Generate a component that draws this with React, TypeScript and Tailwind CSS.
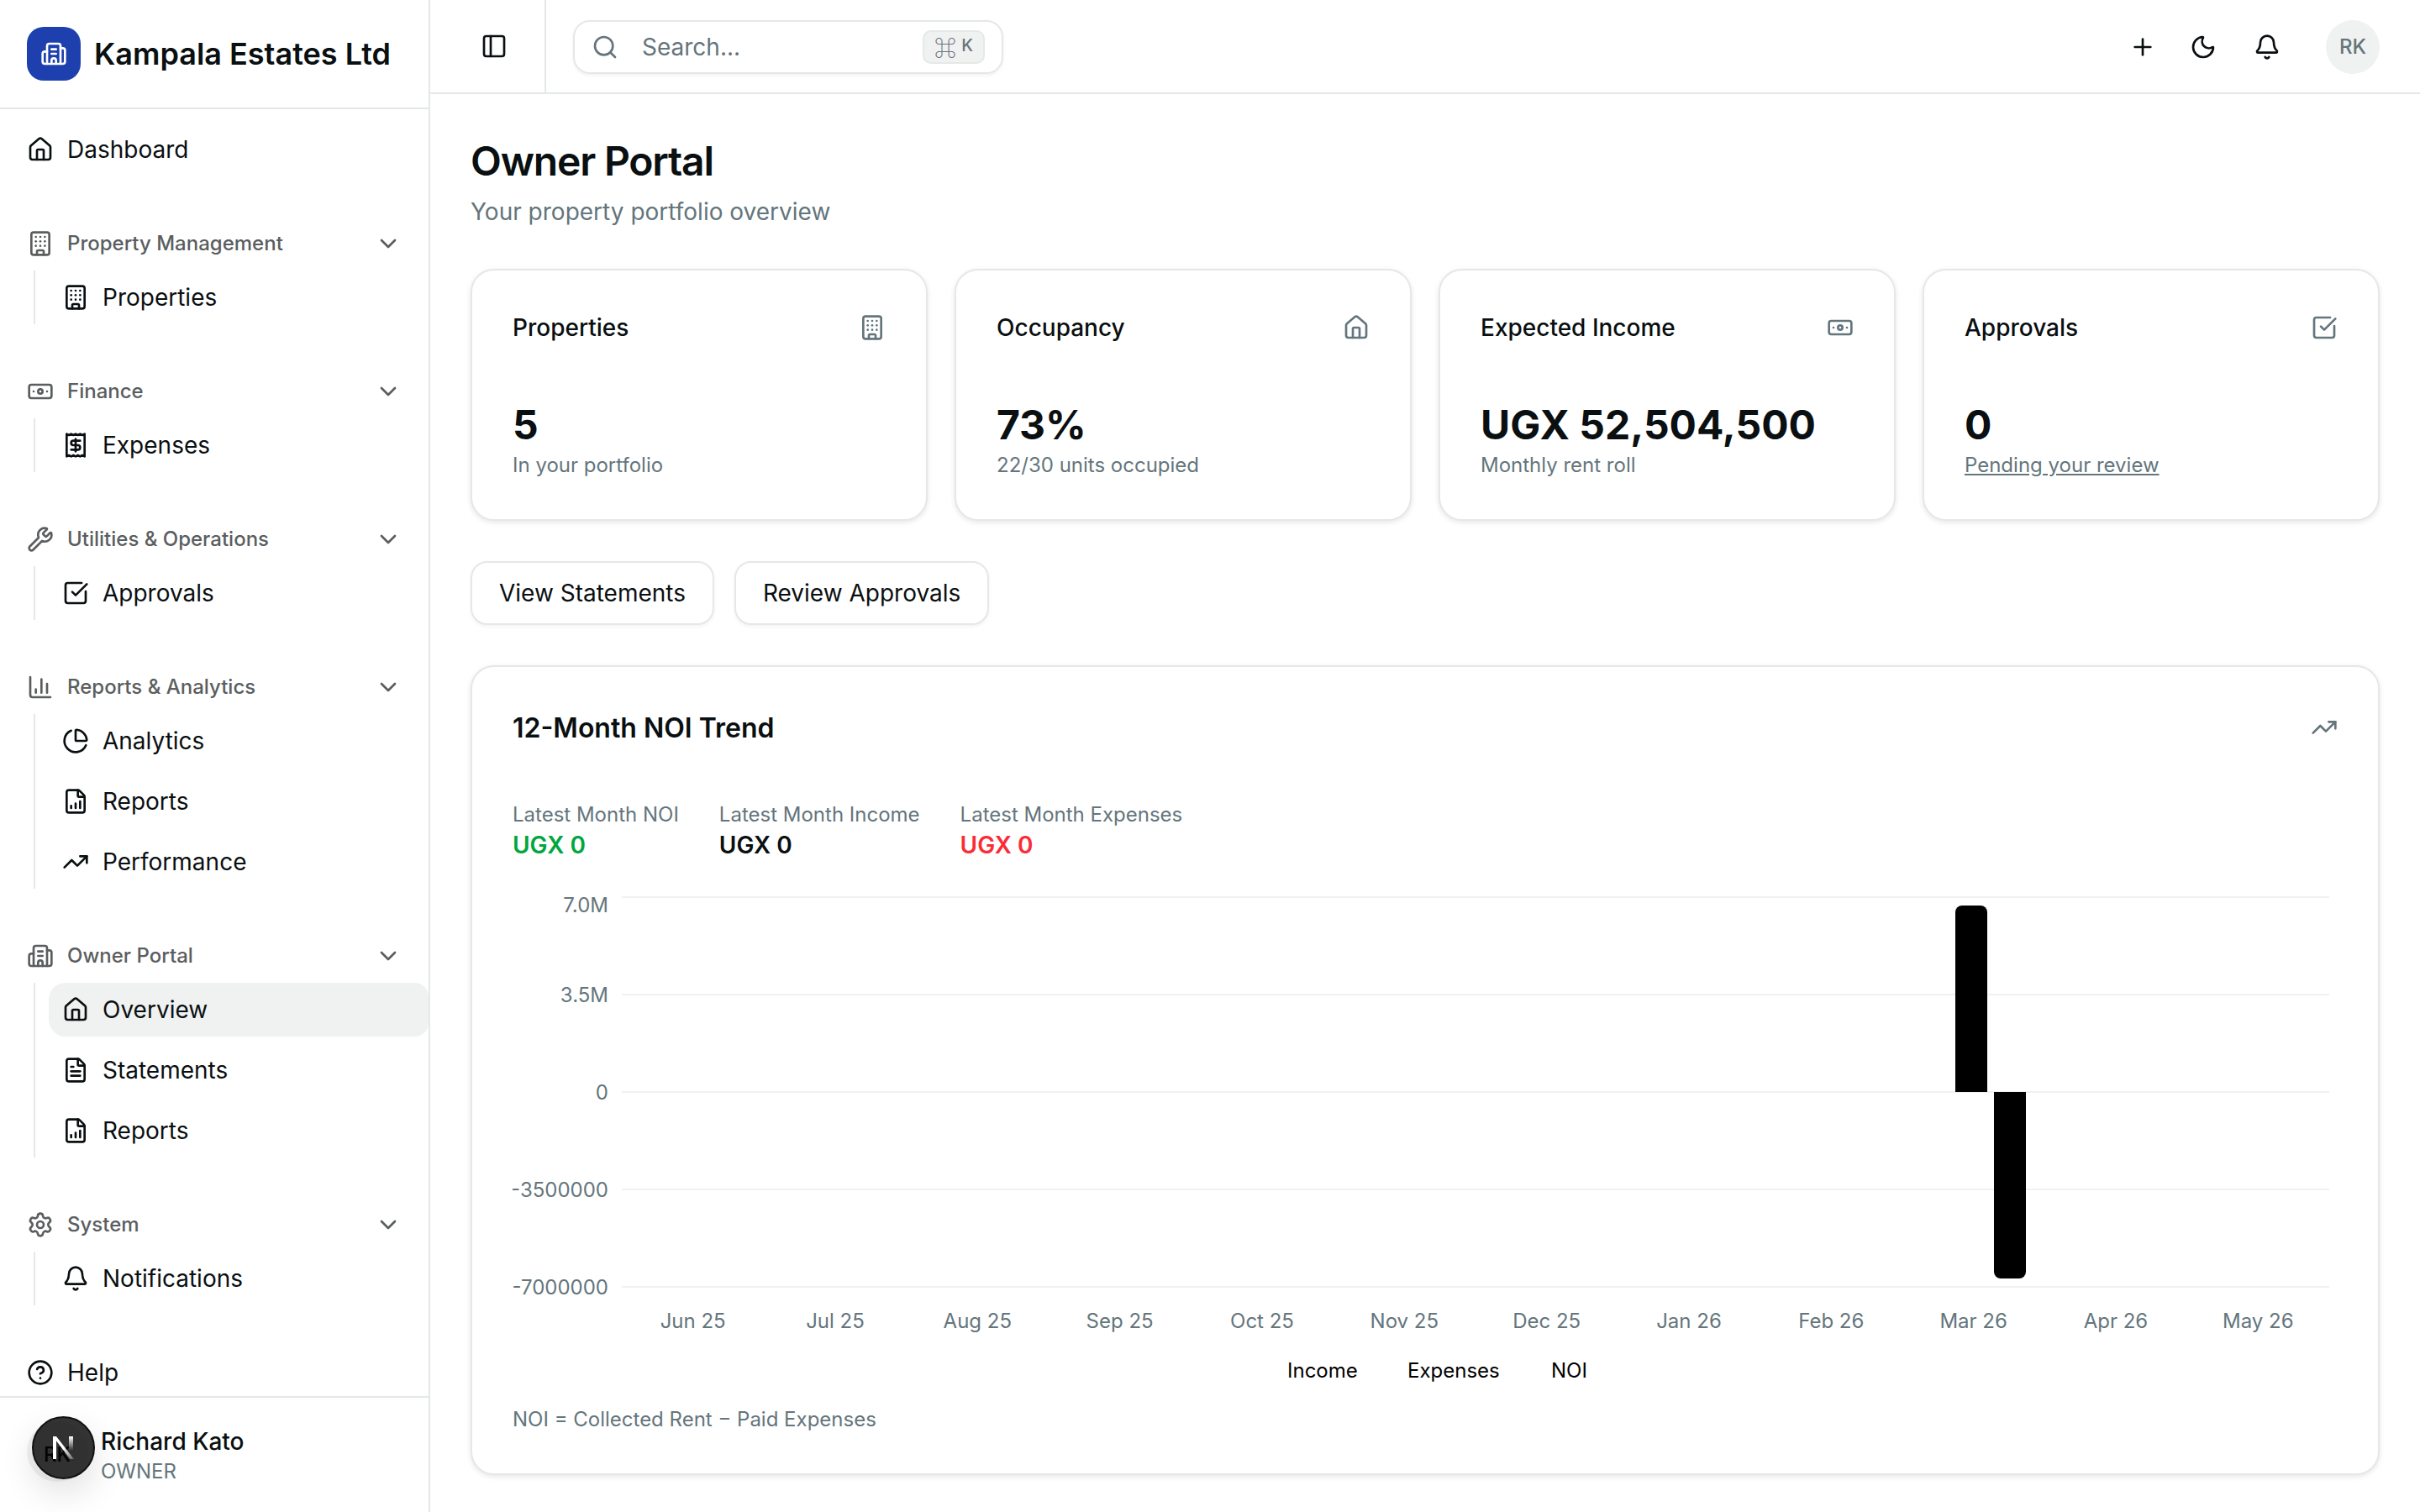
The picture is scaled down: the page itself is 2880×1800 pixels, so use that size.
import {
  Banknote,
  Bell,
  Building,
  Building2,
  ChartColumn,
  ChartPie,
  ChevronDown,
  CircleHelp,
  FileChartColumnIncreasing,
  FileText,
  House,
  Moon,
  PanelLeft,
  Plus,
  Receipt,
  Search,
  Settings,
  SquareCheckBig,
  TrendingUp,
  Wrench,
} from "lucide-react";
import type { LucideIcon } from "lucide-react";

interface NavItem {
  label: string;
  icon: LucideIcon;
  active?: boolean;
}

interface NavGroup {
  label: string;
  icon: LucideIcon;
  items: NavItem[];
}

const groups: NavGroup[] = [
  { label: "Property Management", icon: Building, items: [{ label: "Properties", icon: Building }] },
  { label: "Finance", icon: Banknote, items: [{ label: "Expenses", icon: Receipt }] },
  { label: "Utilities & Operations", icon: Wrench, items: [{ label: "Approvals", icon: SquareCheckBig }] },
  {
    label: "Reports & Analytics",
    icon: ChartColumn,
    items: [
      { label: "Analytics", icon: ChartPie },
      { label: "Reports", icon: FileChartColumnIncreasing },
      { label: "Performance", icon: TrendingUp },
    ],
  },
  {
    label: "Owner Portal",
    icon: Building2,
    items: [
      { label: "Overview", icon: House, active: true },
      { label: "Statements", icon: FileText },
      { label: "Reports", icon: FileChartColumnIncreasing },
    ],
  },
  { label: "System", icon: Settings, items: [{ label: "Notifications", icon: Bell }] },
];

const stats = [
  { title: "Properties", value: "5", note: "In your portfolio", icon: Building },
  { title: "Occupancy", value: "73%", note: "22/30 units occupied", icon: House },
  { title: "Expected Income", value: "UGX 52,504,500", note: "Monthly rent roll", icon: Banknote },
  { title: "Approvals", value: "0", note: "Pending your review", icon: SquareCheckBig, link: true },
];

const months = ["Jun 25", "Jul 25", "Aug 25", "Sep 25", "Oct 25", "Nov 25", "Dec 25", "Jan 26", "Feb 26", "Mar 26", "Apr 26", "May 26"];

const yTicks = [
  { y: 10, label: "7.0M", dy: 18 },
  { y: 126, label: "3.5M", dy: 9 },
  { y: 242, label: "0", dy: 9 },
  { y: 358, label: "-3500000", dy: 9 },
  { y: 474, label: "-7000000", dy: 9 },
];

function Sidebar() {
  return (
    <aside className="flex h-full w-[512px] shrink-0 flex-col border-r-2 border-[#e4e8e7]">
      <div className="flex h-[130px] shrink-0 items-center gap-4 border-b-2 border-[#e4e8e7] pl-8">
        <div className="flex size-16 items-center justify-center rounded-[20px] bg-[#1e40af] text-white">
          <Building2 className="size-8" />
        </div>
        <span className="text-[36px] font-semibold leading-[48px]">Kampala Estates Ltd</span>
      </div>

      <nav className="flex min-h-0 flex-1 flex-col gap-12 overflow-hidden pt-4">
        <div className="flex h-16 shrink-0 items-center gap-4 px-8 text-[28px] leading-10">
          <House className="size-8" />
          Dashboard
        </div>
        {groups.map((group) => (
          <div key={group.label} className="shrink-0">
            <div className="flex h-16 items-center gap-4 px-8 text-[24px] font-medium leading-8 text-[#5a5e5f]">
              <group.icon className="size-8" />
              <span className="flex-1">{group.label}</span>
              <ChevronDown className="size-8" />
            </div>
            <div className="ml-10 flex flex-col gap-2 border-l-2 border-[#e4e8e7] pl-4">
              {group.items.map((item) => (
                <div
                  key={item.label}
                  className={`flex h-16 items-center gap-4 rounded-l-[20px] rounded-r-[16px] px-4 text-[28px] leading-10 ${item.active ? "bg-[#f0f2f1]" : ""}`}
                >
                  <item.icon className="size-8" />
                  {item.label}
                </div>
              ))}
            </div>
          </div>
        ))}
        <div className="flex h-[60px] shrink-0 items-center gap-4 px-8 pt-1 text-[28px] leading-10">
          <CircleHelp className="size-8" />
          Help
        </div>
      </nav>

      <div className="relative flex h-[138px] shrink-0 gap-4 border-t-2 border-[#e4e8e7] pl-8 pt-7">
        <div className="flex size-[72px] items-center justify-center rounded-full bg-[#f0f2f1] pt-2 text-[24px] font-medium">RK</div>
        <div className="mt-1">
          <div className="text-[28px] font-medium leading-10">Richard Kato</div>
          <div className="text-[24px] leading-8 text-[#64757c]">OWNER</div>
        </div>
        {/* dev indicator sitting over the avatar */}
        <div className="absolute left-[38px] top-[22px] flex size-[75px] items-center justify-center rounded-full border-2 border-[#111] bg-black/80 shadow-[0_16px_40px_rgba(0,0,0,0.12)]">
          <svg width="28" height="28" viewBox="0 0 28 28" fill="none">
            <defs>
              <linearGradient id="nStem" x1="0" y1="0" x2="0" y2="1">
                <stop offset="0" stopColor="#fff" />
                <stop offset="1" stopColor="#fff" stopOpacity="0" />
              </linearGradient>
              <linearGradient id="nDiag" x1="0" y1="0" x2="1" y2="1">
                <stop offset="0.5" stopColor="#fff" />
                <stop offset="1" stopColor="#fff" stopOpacity="0.25" />
              </linearGradient>
            </defs>
            <rect x="1" y="0" width="4" height="27" fill="#fff" />
            <path d="M1 0h4l21 27h-4.5z" fill="url(#nDiag)" />
            <rect x="20" y="0" width="5" height="17" fill="url(#nStem)" />
          </svg>
        </div>
      </div>
    </aside>
  );
}

function TopBar() {
  return (
    <header className="flex h-[112px] shrink-0 items-center border-b-2 border-[#e4e8e7] pr-12">
      <div className="flex h-full w-[138px] items-center border-r-2 border-[#e4e8e7] pl-[60px]">
        <PanelLeft className="size-8" />
      </div>
      <div className="ml-8 mt-0.5 flex h-16 w-[512px] items-center rounded-[20px] border-2 border-[#e4e8e7] px-5 shadow-[0_2px_4px_rgba(0,0,0,0.05)]">
        <Search className="size-8 text-[#64757c]" />
        <span className="ml-7 flex-1 text-[28px] text-[#64757c]">Search...</span>
        <span className="flex h-10 w-[74px] items-center justify-center gap-1.5 rounded-[10px] border-2 border-[#e4e8e7] bg-[#f0f2f1] text-[20px] font-medium leading-none text-[#64757c]">
          <span className="text-[26px] font-normal [font-family:'Noto_Sans_CJK_SC',sans-serif]">⌘</span>
          <span className="-mt-1">K</span>
        </span>
      </div>
      <div className="ml-auto mt-0.5 flex items-center">
        <div className="flex w-[72px] justify-center">
          <Plus className="size-8" />
        </div>
        <div className="flex w-[72px] justify-center">
          <Moon className="size-8" />
        </div>
        <div className="ml-1 flex w-[72px] justify-center">
          <Bell className="size-8" />
        </div>
        <div className="ml-[34px] flex size-16 items-center justify-center rounded-full bg-[#f0f2f1] text-[24px] font-medium text-[#64757c]">RK</div>
      </div>
    </header>
  );
}

function StatCard({ title, value, note, icon: Icon, link }: (typeof stats)[number]) {
  return (
    <div className="h-[300px] rounded-[28px] border-2 border-[#e4e8e7] bg-white px-12 pt-12 shadow-[0_2px_6px_rgba(0,0,0,0.1)]">
      <div className="flex h-10 items-center justify-between">
        <span className="text-[28px] font-medium leading-10">{title}</span>
        <Icon className="size-8 text-[#64757c]" />
      </div>
      <div className="mt-16 text-[48px] font-bold leading-[64px]">{value}</div>
      <div className={`text-[24px] leading-8 text-[#64757c] ${link ? "underline" : ""}`}>{note}</div>
    </div>
  );
}

function NoiChart() {
  return (
    <svg width="2172" height="600" viewBox="0 0 2172 600" className="mt-8 block">
      {yTicks.map((t) => (
        <g key={t.label}>
          <line x1="130" x2="2162" y1={t.y} y2={t.y} stroke="#f0f2f1" strokeWidth="2" />
          <text x="114" y={t.y + t.dy} textAnchor="end" className="fill-[#64757c] text-[24px]">
            {t.label}
          </text>
        </g>
      ))}
      {months.map((m, i) => (
        <text key={m} x={130 + 169.33 * (i + 0.5)} y="523" textAnchor="middle" className="fill-[#64757c] text-[24px]">
          {m}
        </text>
      ))}
      <path d="M1717 242V28a8 8 0 0 1 8-8h22a8 8 0 0 1 8 8v214z" fill="#000" />
      <path d="M1763 242h38v214a8 8 0 0 1-8 8h-22a8 8 0 0 1-8-8z" fill="#000" />
      <text x="922" y="582" className="fill-black text-[24px]">Income</text>
      <text x="1065" y="582" className="fill-black text-[24px]">Expenses</text>
      <text x="1236" y="582" className="fill-black text-[24px]">NOI</text>
    </svg>
  );
}

function ChartCard() {
  return (
    <div className="mt-12 rounded-[28px] border-2 border-[#e4e8e7] bg-white px-12 pb-12 pt-12 shadow-[0_2px_6px_rgba(0,0,0,0.1)]">
      <div className="flex h-[50px] items-center justify-between">
        <h2 className="text-[32px] font-semibold leading-[50px]">12-Month NOI Trend</h2>
        <TrendingUp className="-mt-0.5 size-8 text-[#64757c]" />
      </div>
      <div className="mt-[62px] flex gap-12">
        <div>
          <div className="text-[24px] leading-8 text-[#64757c]">Latest Month NOI</div>
          <div className="text-[28px] font-semibold leading-10 text-[#00a63e]">UGX 0</div>
        </div>
        <div>
          <div className="text-[24px] leading-8 text-[#64757c]">Latest Month Income</div>
          <div className="text-[28px] font-semibold leading-10">UGX 0</div>
        </div>
        <div>
          <div className="text-[24px] leading-8 text-[#64757c]">Latest Month Expenses</div>
          <div className="text-[28px] font-semibold leading-10 text-[#fb2c36]">UGX 0</div>
        </div>
      </div>
      <NoiChart />
      <p className="mt-4 text-[24px] leading-8 text-[#64757c]">NOI = Collected Rent − Paid Expenses</p>
    </div>
  );
}

export default function App() {
  return (
    <div className="flex h-screen w-full overflow-hidden bg-white text-[#0a0f11] [font-family:Inter,sans-serif]">
      <Sidebar />
      <div className="flex min-w-0 flex-1 flex-col overflow-hidden">
        <TopBar />
        <main className="px-12 pt-12">
          <h1 className="text-[48px] font-semibold leading-[64px] tracking-tight">Owner Portal</h1>
          <p className="mt-2 text-[28px] leading-10 text-[#64757c]">Your property portfolio overview</p>
          <div className="mt-12 grid grid-cols-4 gap-8">
            {stats.map((s) => (
              <StatCard key={s.title} {...s} />
            ))}
          </div>
          <div className="mt-12 flex gap-6">
            <button className="h-[76px] rounded-[20px] border-2 border-[#e4e8e7] bg-white px-8 text-[28px] shadow-[0_2px_4px_rgba(0,0,0,0.05)]">View Statements</button>
            <button className="h-[76px] rounded-[20px] border-2 border-[#e4e8e7] bg-white px-8 text-[28px] shadow-[0_2px_4px_rgba(0,0,0,0.05)]">Review Approvals</button>
          </div>
          <ChartCard />
        </main>
      </div>
    </div>
  );
}
